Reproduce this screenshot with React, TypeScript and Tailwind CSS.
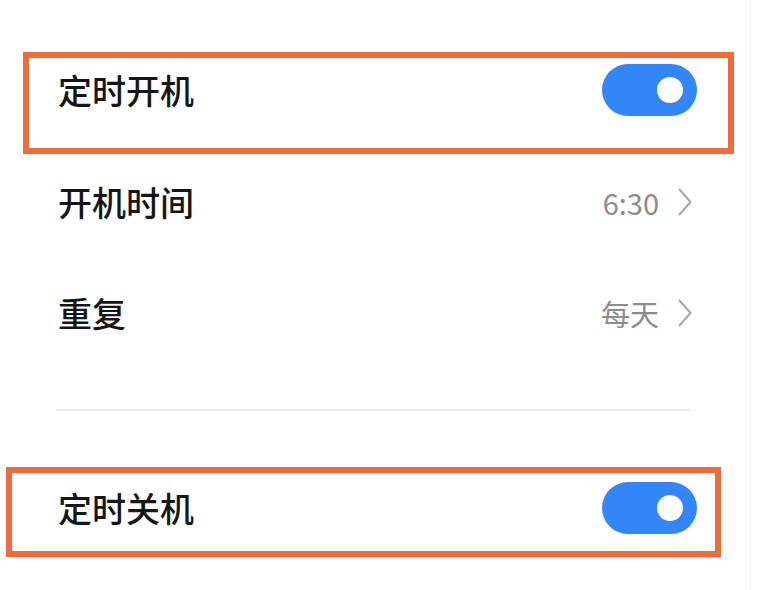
const font = { fontFamily: '"Noto Sans CJK SC", "Noto Sans", sans-serif' };

function Toggle() {
  return (
    <div className="w-[95px] h-[52px] rounded-full bg-[#3386f7] flex items-center justify-end pr-[14px]">
      <div className="w-[26px] h-[26px] rounded-full bg-white" />
    </div>
  );
}

function Chevron() {
  return (
    <svg width="14" height="28" viewBox="0 0 14 28" fill="none" className="text-[#a6a6a6]">
      <polyline points="1.5,1.5 12.5,14 1.5,26.5" stroke="currentColor" strokeWidth="2" strokeLinecap="round" strokeLinejoin="round" />
    </svg>
  );
}

function LinkRow({ label, value, className }: { label: string; value: string; className: string }) {
  return (
    <div className={`h-[60px] pl-[58px] pr-[58px] flex items-center justify-between ${className}`}>
      <span className="text-[34px] font-medium text-[#161616] leading-none">{label}</span>
      <div className="flex items-center gap-[19px] text-[29px] text-[#8c8c8c] leading-none">
        <span>{value}</span>
        <Chevron />
      </div>
    </div>
  );
}

export default function App() {
  return (
    <div className="w-[769px] h-[590px] bg-white overflow-hidden" style={font}>
      <div className="w-[751px] h-full border-r border-[#f3f3f3] pt-[52px]">
        {/* 定时开机 */}
        <div className="ml-[23px] w-[711px] h-[102px] border-[6px] border-[#ef6c3a] pt-[6px] pl-[29px] pr-[31px]">
          <div className="h-[52px] flex items-center justify-between">
            <span className="text-[34px] font-medium text-[#161616] leading-none">定时开机</span>
            <Toggle />
          </div>
        </div>

        <LinkRow label="开机时间" value="6:30" className="mt-[18px]" />
        <LinkRow label="重复" value="每天" className="mt-[51px]" />

        <div className="mt-[66px] ml-[56px] w-[634px] h-[2px] bg-[#eeeeee]" />

        {/* 定时关机 */}
        <div className="mt-[56px] ml-[6px] w-[715px] h-[90px] border-[6px] border-[#ef6c3a] pt-[9px] pl-[46px] pr-[18px]">
          <div className="h-[52px] flex items-center justify-between">
            <span className="text-[34px] font-medium text-[#161616] leading-none">定时关机</span>
            <Toggle />
          </div>
        </div>
      </div>
    </div>
  );
}
